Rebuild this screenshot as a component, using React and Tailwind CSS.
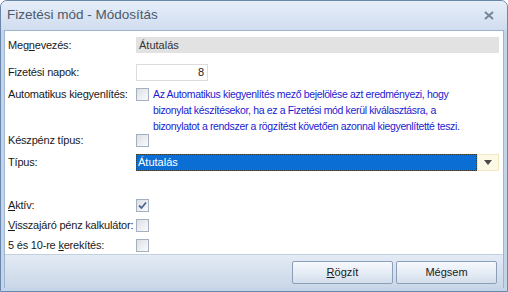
import React from "react";

// ── Checkbox ───────────────────────────────────────────────
function Box({ checked }) {
  return (
    <span className="w-[13px] h-[13px] border border-[#a3b0c0] bg-gradient-to-br from-[#dcdfe4] to-[#fbfbfc] flex items-center justify-center shrink-0">
      {checked && (
        <svg width="11" height="11" viewBox="0 0 11 11">
          <path d="M2 5.5 L4.5 8 L9 2.5" fill="none" stroke="#4d6690" strokeWidth="1.8" />
        </svg>
      )}
    </span>
  );
}

// ── Row ────────────────────────────────────────────────────
function Row({ label, className = "", children }) {
  return (
    <div className={`flex items-center ${className}`}>
      <div className="w-[128px] shrink-0 text-[#1a1a1a] whitespace-nowrap tracking-[-0.2px]">{label}</div>
      {children}
    </div>
  );
}

// ── Button ─────────────────────────────────────────────────
function Btn({ children }) {
  return (
    <button className="w-[101px] h-[23px] border border-[#8d9fb8] rounded-[2px] bg-gradient-to-b from-[#f6f9fd] via-[#e6edf6] to-[#d3deec] text-[#1a1a1a] flex items-center justify-center">
      {children}
    </button>
  );
}

export default function App() {
  return (
    <div
      className="w-[508px] h-[292px] flex flex-col border border-[#6b86ab] rounded-t-[7px] bg-[#c4d4e9] overflow-hidden text-[11px]"
      style={{ fontFamily: '"Liberation Sans", Arial, sans-serif' }}
    >
      {/* title bar */}
      <div className="h-[29px] shrink-0 flex items-center justify-between pl-[6px] pr-[13px] bg-gradient-to-b from-[#e6eef9] to-[#d0ddef]">
        <span className="text-[13.5px] text-[#4b596b]">Fizetési mód - Módosítás</span>
        <svg width="10" height="9" viewBox="0 0 10 9">
          <path d="M1 1 L9 8 M9 1 L1 8" stroke="#76849a" strokeWidth="2" />
        </svg>
      </div>

      <div className="flex-1 flex flex-col mx-[3px] mb-[3px] border border-[#9fb4d1] border-b-0">
        {/* content */}
        <div className="flex-1 bg-white pl-[3px] pr-[4px] pt-[6px] flex flex-col">
          <Row label={<span>Meg<u>n</u>evezés:</span>}>
            <div className="flex-1 h-[16px] bg-[#e2e2e2] pl-[3px] flex items-center text-[#333]">Átutalás</div>
          </Row>

          <Row label="Fizetési napok:" className="mt-[10px]">
            <div className="w-[72px] h-[17px] border border-[#dcdcdc] flex items-center justify-end pr-[3px] text-[#1a1a1a]">8</div>
          </Row>

          <div className="flex mt-[5px]">
            <div className="w-[128px] shrink-0 text-[#1a1a1a] leading-[16px] whitespace-nowrap tracking-[-0.2px]">Automatikus kiegyenlítés:</div>
            <div className="pt-[2px]"><Box /></div>
            <div className="ml-[4px] text-[#1b1bd2] text-[10.5px] leading-[16px] whitespace-nowrap tracking-[-0.35px]">
              Az Automatikus kiegyenlítés mező bejelölése azt eredményezi, hogy
              <br />
              bizonylat készítésekor, ha ez a Fizetési mód kerül kiválasztásra, a
              <br />
              bizonylatot a rendszer a rögzítést követően azonnal kiegyenlítetté teszi.
            </div>
          </div>

          <Row label="Készpénz típus:" className="h-[14px]">
            <Box />
          </Row>

          <Row label="Típus:" className="mt-[6px]">
            <div className="flex-1 h-[17px] flex">
              <div className="flex-1 bg-[#0b6ed4] outline-1 outline-dotted outline-[#3a3a2a] -outline-offset-1 text-white pl-[2px] flex items-center">
                Átutalás
              </div>
              <div className="w-[22px] bg-[#fcf9e4] border border-[#efe8c8] flex items-center justify-center">
                <svg width="8" height="5" viewBox="0 0 8 5">
                  <path d="M0 0 L8 0 L4 5 Z" fill="#4a4a4a" />
                </svg>
              </div>
            </div>
          </Row>

          <Row label={<span><u>A</u>ktív:</span>} className="mt-[27px] h-[16px]">
            <Box checked />
          </Row>
          <Row label={<span><u>V</u>isszajáró pénz kalkulátor:</span>} className="mt-[4px] h-[16px]">
            <Box />
          </Row>
          <Row label={<span>5 és 10-re <u>k</u>erekítés:</span>} className="mt-[4px] h-[16px]">
            <Box />
          </Row>
        </div>

        {/* button bar */}
        <div className="h-[34px] shrink-0 bg-gradient-to-b from-[#e3ebf5] to-[#cad7e8] border-t border-[#c2cfdf] flex items-center justify-end gap-[3px] pr-[6px] pt-[2px]">
          <Btn><span><u>R</u>ögzít</span></Btn>
          <Btn>Mégsem</Btn>
        </div>
      </div>
    </div>
  );
}
